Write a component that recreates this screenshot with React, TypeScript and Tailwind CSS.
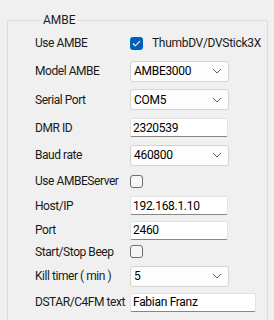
import React from "react";

const font = { fontFamily: "Roboto, 'Liberation Sans', sans-serif" };

function Chevron() {
  return (
    <svg width="10" height="6" viewBox="0 0 10 6" className="shrink-0">
      <path d="M1 1 L5 5 L9 1" fill="none" stroke="#5f5f5f" strokeWidth="1" />
    </svg>
  );
}

function Combo({ value }: { value: string }) {
  return (
    <div className="flex h-[21px] w-[99px] items-center justify-between rounded-[3px] border border-[#d3d3d3] bg-[#fdfdfd] pl-[3px] pr-[6px] text-[12px] text-black tracking-[-0.3px]">
      <span>{value}</span>
      <Chevron />
    </div>
  );
}

function TextBox({ value, wide }: { value: string; wide?: boolean }) {
  return (
    <div
      className={`flex h-[19px] items-center rounded-[2px] border border-[#e2e2e2] border-b-[#858585] bg-white pl-[2px] text-[12px] text-black tracking-[-0.3px] ${
        wide ? "w-[126px]" : "w-[98px]"
      }`}
    >
      {value}
    </div>
  );
}

function Check({ checked }: { checked?: boolean }) {
  if (checked) {
    return (
      <div className="flex h-[13px] w-[13px] items-center justify-center rounded-[3px] bg-[#005fb8]">
        <svg width="9" height="7" viewBox="0 0 9 7">
          <path d="M1 3.5 L3.3 5.8 L8 1.2" fill="none" stroke="white" strokeWidth="1.1" />
        </svg>
      </div>
    );
  }
  return <div className="h-[13px] w-[13px] rounded-[3px] border border-[#6e6e6e] bg-[#f6f6f6]" />;
}

function Row({ label, h, children }: { label: string; h: string; children: React.ReactNode }) {
  return (
    <div className={`flex items-center ${h}`}>
      <div className="w-[95px] shrink-0 text-[12px] text-[#1a1a1a] tracking-[-0.45px] whitespace-nowrap">{label}</div>
      {children}
    </div>
  );
}

export default function App() {
  return (
    <div className="h-[320px] w-[274px] overflow-hidden bg-[#f0f0f0] pl-[7px] pt-[13px]" style={font}>
      <fieldset className="h-[330px] w-[261px] rounded-[2px] border border-[#dcdcdc] pl-[27px]">
        <legend className="ml-[7px] px-[1px] text-[12px] leading-[14px] text-[#1a1a1a]">AMBE</legend>
        <div className="flex flex-col pt-[2px]">
          <Row label="Use AMBE" h="h-[28px]">
            <div className="flex items-center gap-[9px]">
              <Check checked />
              <span className="text-[12px] tracking-[-0.3px] text-[#1a1a1a]">ThumbDV/DVStick3X</span>
            </div>
          </Row>
          <Row label="Model AMBE" h="h-[28px]">
            <Combo value="AMBE3000" />
          </Row>
          <Row label="Serial Port" h="h-[29px]">
            <Combo value="COM5" />
          </Row>
          <Row label="DMR ID" h="h-[27px]">
            <TextBox value="2320539" />
          </Row>
          <Row label="Baud rate" h="h-[28px]">
            <Combo value="460800" />
          </Row>
          <Row label="Use AMBEServer" h="h-[24px]">
            <Check />
          </Row>
          <Row label="Host/IP" h="h-[25px]">
            <TextBox value="192.168.1.10" />
          </Row>
          <Row label="Port" h="h-[24px]">
            <TextBox value="2460" />
          </Row>
          <Row label="Start/Stop Beep" h="h-[19px]">
            <Check />
          </Row>
          <Row label="Kill timer ( min )" h="h-[30px]">
            <Combo value="5" />
          </Row>
          <Row label="DSTAR/C4FM text" h="h-[22px]">
            <TextBox value="Fabian Franz" wide />
          </Row>
        </div>
      </fieldset>
    </div>
  );
}
